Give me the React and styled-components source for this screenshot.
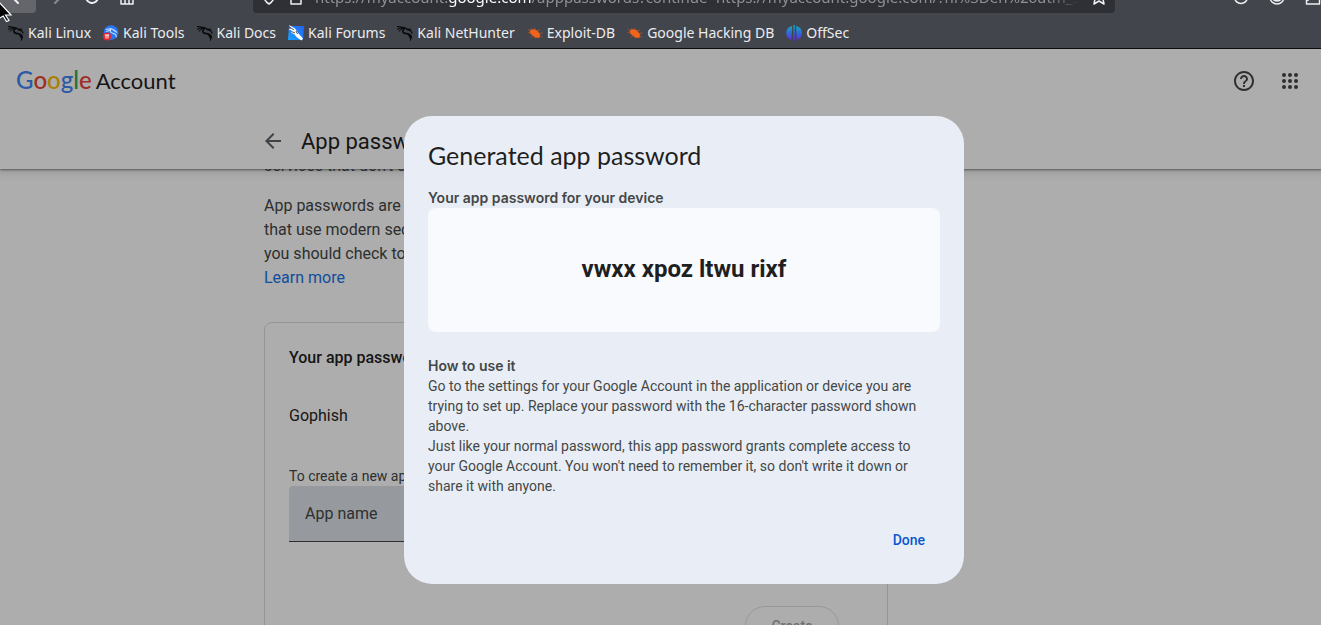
import React from "react";
import styled, { createGlobalStyle } from "styled-components";

const ui = '"Noto Sans", "Open Sans", sans-serif';
const text = 'Roboto, "Liberation Sans", sans-serif';
const label = 'Inter, Roboto, sans-serif';
const display = 'Lato, Roboto, sans-serif';

const GlobalStyle = createGlobalStyle`
  *, *::before, *::after { box-sizing: border-box; }
  html, body { margin: 0; padding: 0; }
  body { background: #fff; font-family: ${text}; overflow: hidden; }
  h1, h2, h3, p { margin: 0; }
  button, input { font: inherit; }
`;

const Shell = styled.div`
  display: flex;
  flex-direction: column;
  height: 100vh;
  overflow: hidden;
`;

/* Browser chrome */

const Chrome = styled.header`
  flex: none;
  background: #42454c;
  border-bottom: 1px solid #0c0c0d;
  font-family: ${ui};
  overflow: hidden;
`;

const NavBar = styled.div`
  display: flex;
  align-items: center;
  height: 32px;
  margin-top: -19px;
  color: #f0f0f2;
`;

const NavButtons = styled.div`
  display: flex;
  align-items: center;
  width: 253px;
`;

const NavButton = styled.button`
  display: grid;
  place-items: center;
  width: ${(p) => p.$width || 36}px;
  height: 32px;
  padding: 0;
  border: 0;
  border-radius: 4px;
  background: ${(p) => (p.$active ? "#64666b" : "transparent")};
  color: inherit;
  opacity: ${(p) => (p.$faded ? 0.4 : 1)};
`;

const UrlBar = styled.div`
  display: flex;
  align-items: center;
  flex: 1;
  gap: 11px;
  height: 32px;
  padding: 0 8px;
  border-radius: 4px;
  background: #2f3036;
  min-width: 0;
`;

const UrlText = styled.div`
  flex: 1;
  overflow: hidden;
  white-space: nowrap;
  font-size: 15px;
  line-height: 20px;
  color: #8f8f95;
  mask-image: linear-gradient(to right, #000 calc(100% - 32px), transparent);
  b { font-weight: 400; color: #fbfbfe; }
`;

const ChromeActions = styled.div`
  display: flex;
  justify-content: flex-end;
  width: 216px;
  margin-right: -10px;
`;

const Bookmarks = styled.nav`
  display: flex;
  align-items: center;
  gap: 12px;
  height: 35px;
  padding: 4px 8px 0;
`;

const Bookmark = styled.a`
  display: flex;
  align-items: center;
  gap: 4px;
  color: #ececef;
  font-size: 14px;
  line-height: 20px;
  text-decoration: none;
  white-space: nowrap;
`;

const Pointer = styled.svg`
  position: absolute;
  top: 0;
  left: 0;
  z-index: 5;
`;

/* Account page */

const Page = styled.div`
  position: relative;
  flex: 1;
  display: flex;
  flex-direction: column;
  width: calc(100% + 47px);
  min-height: 0;
  overflow: hidden;
  color: #1f1f1f;
`;

const AppBar = styled.header`
  position: relative;
  z-index: 1;
  flex: none;
  background: #fff;
  box-shadow: 0 1px 2px rgba(60, 64, 67, 0.6), 0 2px 8px 2px rgba(60, 64, 67, 0.15);
`;

const BrandRow = styled.div`
  display: flex;
  align-items: center;
  justify-content: space-between;
  height: 64px;
  padding: 0 58px 0 16px;
`;

const Brand = styled.a`
  display: flex;
  align-items: baseline;
  gap: 4px;
  padding-bottom: 2px;
  color: #1f1f1f;
  font-family: ${display};
  font-size: 22px;
  line-height: 32px;
  text-decoration: none;
`;

const Wordmark = styled.span`
  font-size: 24px;
  font-weight: 500;
`;

const Letter = styled.span`
  color: ${(p) => p.$color};
`;

const Tools = styled.div`
  display: flex;
  gap: 6px;
`;

const IconButton = styled.button`
  display: grid;
  place-items: center;
  width: ${(p) => p.$size || 40}px;
  height: ${(p) => p.$size || 40}px;
  padding: 0;
  border: 0;
  background: none;
  color: #444746;
`;

const Column = styled.div`
  width: 100%;
  max-width: 840px;
  margin: 0 auto;
`;

const TitleRow = styled(Column)`
  display: flex;
  align-items: center;
  gap: 19px;
  height: 56px;
`;

const PageTitle = styled.h1`
  padding-top: 2px;
  font-family: ${text};
  font-size: 22px;
  font-weight: 400;
  line-height: 28px;
`;

const Content = styled.main`
  flex: 1;
  min-height: 0;
  overflow: hidden;
`;

const Scrolled = styled(Column)`
  margin-top: -15px;
`;

const Paragraph = styled.p`
  max-width: 624px;
  margin-bottom: 16px;
  color: #444746;
  font-size: 16px;
  line-height: 24px;
`;

const TextLink = styled.a`
  color: #1a73e8;
  text-decoration: none;
`;

const Card = styled.section`
  max-width: 624px;
  margin-top: 32px;
  padding: 23px 24px;
  border: 1px solid #dadce0;
  border-radius: 8px;
`;

const CardTitle = styled.h2`
  font-size: 16px;
  font-weight: 500;
  line-height: 24px;
`;

const AppEntry = styled.p`
  margin-top: 34px;
  font-size: 16px;
  line-height: 24px;
`;

const FieldLabel = styled.label`
  display: block;
  margin-top: 38px;
  color: #444746;
  font-size: 14px;
  line-height: 20px;
`;

const Field = styled.input`
  display: block;
  width: 100%;
  height: 56px;
  padding: 0 16px;
  border: 0;
  border-bottom: 1px solid #444746;
  border-radius: 4px 4px 0 0;
  background: #dde3ea;
  color: #1f1f1f;
  font-size: 16px;
  &::placeholder { color: #444746; opacity: 1; }
`;

const CreateButton = styled.button`
  display: block;
  width: 94px;
  height: 40px;
  margin: 64px 24px 0 auto;
  padding: 0;
  border: 1px solid #e0e0e0;
  border-radius: 20px;
  background: none;
  color: #a5a6a7;
  font-size: 14px;
  font-weight: 500;
`;

/* Dialog */

const Scrim = styled.div`
  position: absolute;
  inset: 0;
  z-index: 2;
  display: flex;
  align-items: flex-start;
  justify-content: center;
  padding-top: 67px;
  background: rgba(0, 0, 0, 0.32);
`;

const Dialog = styled.section`
  width: 100%;
  max-width: 560px;
  padding: 23px 24px 24px;
  border-radius: 28px;
  background: #e9eef6;
  color: #444746;
  font-size: 14px;
  line-height: 20px;
`;

const DialogTitle = styled.h2`
  color: #1f1f1f;
  font-family: ${display};
  font-size: 25px;
  font-weight: 400;
  line-height: 32px;
`;

const Strong = styled.h3`
  font-family: ${label};
  font-size: 14px;
  font-weight: 600;
  line-height: 20px;
  margin-top: ${(p) => p.$top}px;
`;

const PasswordBox = styled.div`
  display: grid;
  place-items: center;
  height: 124px;
  padding-bottom: 2px;
  border-radius: 8px;
  background: #f8fafd;
  color: #1f1f1f;
  font-family: ${text};
  font-size: 24px;
  font-weight: 700;
  line-height: 32px;
`;

const Line = styled.span`
  display: block;
`;

const Actions = styled.div`
  display: flex;
  justify-content: flex-end;
  margin-top: 24px;
`;

const DoneButton = styled.button`
  height: 40px;
  margin: 0 3px 0 0;
  padding: 0 12px;
  border: 0;
  background: none;
  color: #0b57d0;
  font-size: 14px;
  font-weight: 500;
`;

const stroke = (w = 1.5) => ({
  fill: "none",
  stroke: "currentColor",
  strokeWidth: w,
  strokeLinecap: "round",
  strokeLinejoin: "round",
});

function DragonIcon() {
  return (
    <svg width="16" height="16" viewBox="0 0 16 16" fill="none" stroke="#08090a" strokeLinecap="round">
      <path d="M.6 1.600 4 2.200 8.400 3.200 11 4.600" strokeWidth="1.300" />
      <path d="M.4 4.300 3.500 3.400 6.800 3.200M2 6.200 4.600 4.400" strokeWidth="1" />
      <path d="M7.200 3.600C4.600 6 5.600 8.400 9.200 8.600c3 .3 4.600 1.400 5 3.600" strokeWidth="1.700" />
      <path d="M11 4.600 13.800 6 15 8M10.500 4.600l3.200-.6M14.200 12l-.8 3.200M11.600 9.600l1.400 2.800" strokeWidth="1.200" />
    </svg>
  );
}

function ToolsIcon() {
  return (
    <svg width="16" height="16" viewBox="0 0 16 16">
      <circle cx="8" cy="7.500" r="7.300" fill="#2777f5" />
      <path d="M3 4.500 8 3.600 12 5.500M3.500 6.500l4-1.500C6.500 7.500 9 8 11 8.600c1.500.5 2.300 1.600 2.400 3.200M10.500 5.200l3.300 2" fill="none" stroke="#c4dbff" strokeWidth="1.100" strokeLinecap="round" />
      <circle cx="4" cy="11.500" r="4" fill="#e5262f" />
      <path d="M1.800 10h4.400M3 10v3.500M5 10v3.500" stroke="#fff" strokeWidth="1" />
    </svg>
  );
}

function ForumsIcon() {
  return (
    <svg width="16" height="16" viewBox="0 0 16 16">
      <defs>
        <linearGradient id="forums" x1="0" y1="1" x2="1" y2="0">
          <stop offset="0" stopColor="#19a2ff" />
          <stop offset="1" stopColor="#2563f0" />
        </linearGradient>
      </defs>
      <path d="M1 1h15l-1 14H0z" fill="url(#forums)" />
      <path d="M1 0 7 3.500l3.500 5L15 13.500l-1.500 2L9 12.500 6.500 9.500 3 7.500l1-1.500L.5 4 3 3.800z" fill="#fff" />
      <path d="M1.500 2 6 5M3.500 6.600 7 8M8 6l1.500 3" stroke="#20242c" strokeWidth=".8" />
    </svg>
  );
}

function BugIcon() {
  return (
    <svg width="16" height="16" viewBox="0 0 16 16">
      <path d="M2.500 5.200 6 4l4.500 1.700 2.700 4-.8 3.200-4.300-.4-4.700-3.700z" fill="#f26419" />
      <path d="M1 4.300 4 6M.6 7.500l3 .3M4 3l2 2M7 3l3 3M10 6l3-1M12 8.500l3.500-.7M12.500 11l2.800 1.200M6 10.500l-2 2.200M8.500 12l-.5 1.500" stroke="#b5562a" strokeWidth=".8" />
    </svg>
  );
}

function OffSecIcon() {
  return (
    <svg width="16" height="16" viewBox="0 0 16 16">
      <defs>
        <linearGradient id="offsec" gradientUnits="userSpaceOnUse" x1="0" y1="0" x2="0" y2="16">
          <stop offset="0" stopColor="#12b0bd" />
          <stop offset=".5" stopColor="#2d6bd6" />
          <stop offset="1" stopColor="#6d1fe0" />
        </linearGradient>
      </defs>
      <path d="M6 1C-1.500 2.500-1.500 12.500 5 15 6 13 6 5 6 1zM7.400 0h1.400v16H7.400zM10.200 1c7.500 1.500 7.500 11.500 1 14-1-2-1-10-1-14z" fill="url(#offsec)" />
    </svg>
  );
}

const bookmarks = [
  ["Kali Linux", DragonIcon],
  ["Kali Tools", ToolsIcon],
  ["Kali Docs", DragonIcon],
  ["Kali Forums", ForumsIcon],
  ["Kali NetHunter", DragonIcon],
  ["Exploit-DB", BugIcon],
  ["Google Hacking DB", BugIcon],
  ["OffSec", OffSecIcon],
];

const wordmark = [
  ["G", "#4285f4"],
  ["o", "#ea4335"],
  ["o", "#fbbc05"],
  ["g", "#4285f4"],
  ["l", "#34a853"],
  ["e", "#ea4335"],
];

const dots = [6, 12, 18];

function BrowserChrome() {
  return (
    <Chrome>
      <NavBar>
        <NavButtons>
          <NavButton $active aria-label="Back">
            <svg width="16" height="16" viewBox="0 0 16 16" {...stroke(2)}><path d="M15 8H3M8 2 2 8l6 6" /></svg>
          </NavButton>
          <NavButton $width={40} $faded aria-label="Forward">
            <svg width="16" height="16" viewBox="0 0 16 16" {...stroke(2)}><path d="M1 8h12M7 2l6 6-6 6" /></svg>
          </NavButton>
          <NavButton $width={32} aria-label="Reload">
            <svg width="16" height="16" viewBox="0 0 16 16" {...stroke(2)}><path d="M14 8a6 6 0 1 1-2-4.500L14 5V1" /></svg>
          </NavButton>
          <NavButton $width={38} aria-label="Home">
            <svg width="16" height="16" viewBox="0 0 16 16" {...stroke(1.5)}><path d="M2 7v8h12V7M1 7l7-6 7 6M6 15V9M10 15V9" /></svg>
          </NavButton>
        </NavButtons>
        <UrlBar>
          <svg width="16" height="16" viewBox="0 0 16 16" {...stroke(1.5)}><path d="M8 1 2 3c0 5 1 9 6 12 5-3 6-7 6-12z" /></svg>
          <svg width="16" height="16" viewBox="0 0 16 16" {...stroke(1.5)}><path d="M3 7h10v8H3zM5 7V4a3 3 0 0 1 6 0v3" /></svg>
          <UrlText>
            https://myaccount.<b>google.com</b>/apppasswords?continue=https://myaccount.google.com/?hl%3Den%26utm_source%3DOGB
          </UrlText>
          <svg width="16" height="16" viewBox="0 0 16 16" {...stroke(1.5)}><path d="m8 1 2 5 5 .5-3 3.500 1 5-5-3-5 3 1-5L1 6.500 6 6z" /></svg>
        </UrlBar>
        <ChromeActions>
          <NavButton aria-label="Protection">
            <svg width="16" height="16" viewBox="0 0 16 16" {...stroke(1.5)}><circle cx="8" cy="8" r="6.500" /></svg>
          </NavButton>
          <NavButton aria-label="Account">
            <svg width="16" height="16" viewBox="0 0 16 16" {...stroke(1.5)}><circle cx="8" cy="8" r="7" /><path d="M4 9h8c0 4-8 4-8 0z" fill="currentColor" /></svg>
          </NavButton>
          <NavButton aria-label="Extensions">
            <svg width="16" height="16" viewBox="0 0 16 16" {...stroke(1.5)}><path d="M1.500 15v-4c3 1 3-3 3-4h10v8z" /></svg>
          </NavButton>
        </ChromeActions>
      </NavBar>
      <Bookmarks aria-label="Bookmarks">
        {bookmarks.map(([name, Icon]) => (
          <Bookmark href="#" key={name}>
            <Icon />
            {name}
          </Bookmark>
        ))}
      </Bookmarks>
      <Pointer width="14" height="22" viewBox="0 0 14 22">
        <path d="M-2 1 11 15H5.500L9 20.500 6.500 21.500 3.200 16-2 19z" fill="#050505" stroke="#fff" strokeWidth="1.200" />
      </Pointer>
    </Chrome>
  );
}

function PasswordDialog() {
  return (
    <Scrim>
      <Dialog role="dialog" aria-modal="true" aria-labelledby="dialog-title">
        <DialogTitle id="dialog-title">Generated app password</DialogTitle>
        <Strong $top={17}>Your app password for your device</Strong>
        <PasswordBox>vwxx xpoz ltwu rixf</PasswordBox>
        <Strong $top={24}>How to use it</Strong>
        <p>
          <Line>Go to the settings for your Google Account in the application or device you are</Line>
          <Line>trying to set up. Replace your password with the 16-character password shown</Line>
          <Line>above.</Line>
        </p>
        <p>
          <Line>Just like your normal password, this app password grants complete access to</Line>
          <Line>your Google Account. You won't need to remember it, so don't write it down or</Line>
          <Line>share it with anyone.</Line>
        </p>
        <Actions>
          <DoneButton>Done</DoneButton>
        </Actions>
      </Dialog>
    </Scrim>
  );
}

export default function App() {
  return (
    <Shell>
      <GlobalStyle />
      <BrowserChrome />
      <Page>
        <AppBar>
          <BrandRow>
            <Brand href="#">
              <Wordmark>
                {wordmark.map(([letter, color], i) => (
                  <Letter key={i} $color={color}>{letter}</Letter>
                ))}
              </Wordmark>
              Account
            </Brand>
            <Tools>
              <IconButton aria-label="Help">
                <svg width="24" height="24" viewBox="0 0 24 24" fill="currentColor"><path d="M11 18h2v-2h-2v2zm1-16C6.480 2 2 6.480 2 12s4.480 10 10 10 10-4.480 10-10S17.520 2 12 2zm0 18c-4.410 0-8-3.590-8-8s3.590-8 8-8 8 3.590 8 8-3.590 8-8 8zm0-14c-2.210 0-4 1.790-4 4h2c0-1.100.9-2 2-2s2 .9 2 2c0 2-3 1.750-3 5h2c0-2.250 3-2.500 3-5 0-2.210-1.790-4-4-4z" /></svg>
              </IconButton>
              <IconButton aria-label="Google apps">
                <svg width="24" height="24" viewBox="0 0 24 24" fill="currentColor">
                  {dots.map((y) => dots.map((x) => <circle key={`${x}-${y}`} cx={x} cy={y} r="2" />))}
                </svg>
              </IconButton>
            </Tools>
          </BrandRow>
          <TitleRow>
            <IconButton $size={18} aria-label="Back">
              <svg width="18" height="18" viewBox="3 3 18 18" fill="#5f6368"><path d="M20 11H7.830l5.590-5.590L12 4l-8 8 8 8 1.410-1.410L7.830 13H20v-2z" /></svg>
            </IconButton>
            <PageTitle>App passwords</PageTitle>
          </TitleRow>
        </AppBar>
        <Content>
          <Scrolled>
            <Paragraph>
              <Line>services that don't support modern security standards.</Line>
            </Paragraph>
            <Paragraph>
              <Line>App passwords are less secure than using up-to-date apps and services</Line>
              <Line>that use modern security standards. Before you create an app password,</Line>
              <Line>you should check to see if your app needs this in order to sign in.</Line>
              <TextLink href="#">Learn more</TextLink>
            </Paragraph>
            <Card>
              <CardTitle>Your app passwords</CardTitle>
              <AppEntry>Gophish</AppEntry>
              <FieldLabel htmlFor="app-name">To create a new app specific password, type a name for it below…</FieldLabel>
              <Field id="app-name" placeholder="App name" />
              <CreateButton disabled>Create</CreateButton>
            </Card>
          </Scrolled>
        </Content>
        <PasswordDialog />
      </Page>
    </Shell>
  );
}
